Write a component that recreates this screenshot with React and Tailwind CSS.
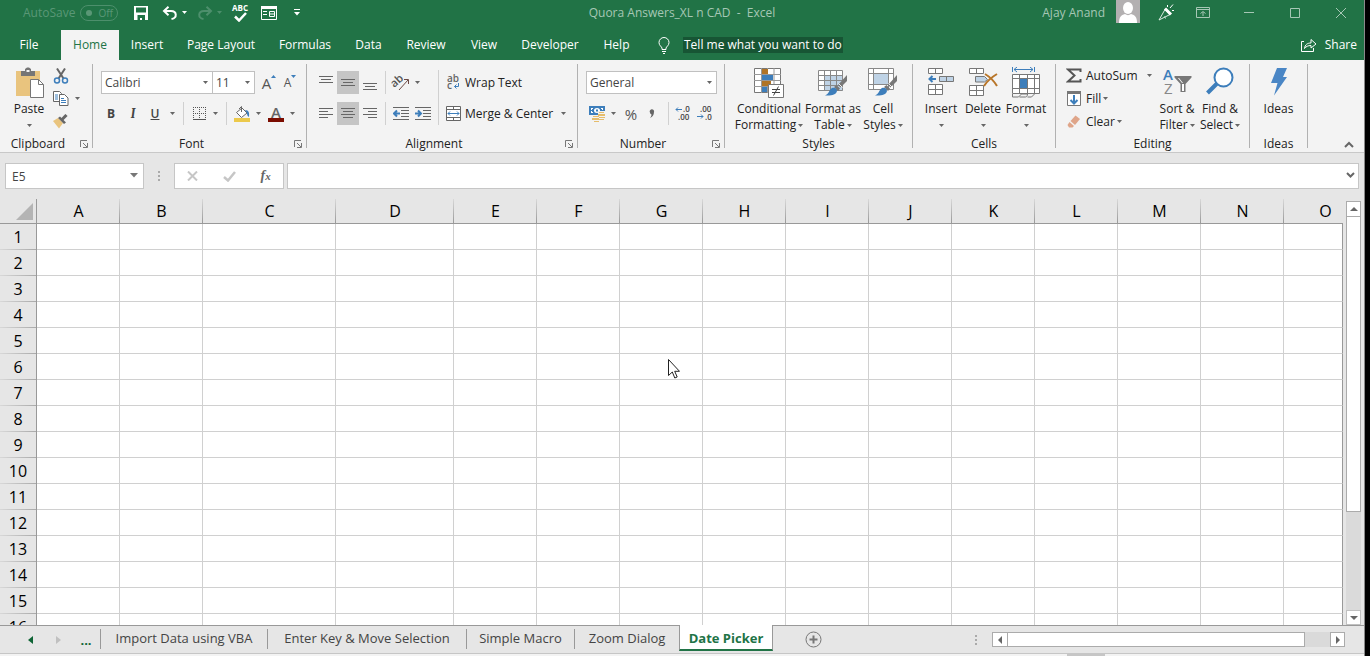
const menuTabs = [
  { name: "Insert", width: "w-[56px]" },
  { name: "Page Layout", width: "w-[92px]" },
  { name: "Formulas", width: "w-[76px]" },
  { name: "Data", width: "w-[51px]" },
  { name: "Review", width: "w-[64px]" },
  { name: "View", width: "w-[52px]" },
  { name: "Developer", width: "w-[80px]" },
  { name: "Help", width: "w-[53px]" },
];

const columns = [
  { name: "A", width: "w-[83px]" },
  { name: "B", width: "w-[83px]" },
  { name: "C", width: "w-[133px]" },
  { name: "D", width: "w-[118px]" },
  { name: "E", width: "w-[83px]" },
  { name: "F", width: "w-[83px]" },
  { name: "G", width: "w-[83px]" },
  { name: "H", width: "w-[83px]" },
  { name: "I", width: "w-[83px]" },
  { name: "J", width: "w-[83px]" },
  { name: "K", width: "w-[83px]" },
  { name: "L", width: "w-[83px]" },
  { name: "M", width: "w-[83px]" },
  { name: "N", width: "w-[83px]" },
  { name: "O", width: "" },
];

const rows = Array.from({ length: 16 }, (_, i) => i + 1);

const sheets = [
  { name: "Import Data using VBA", width: "w-[167px]" },
  { name: "Enter Key & Move Selection", width: "w-[199px]" },
  { name: "Simple Macro", width: "w-[108px]" },
  { name: "Zoom Dialog", width: "w-[105px]" },
];

function Caret({ className = "text-[#666]" }) {
  return (
    <svg className={`shrink-0 ${className}`} width="5" height="3" viewBox="0 0 5 3">
      <path d="M0 0h5L2.500 3z" fill="currentColor" />
    </svg>
  );
}

function Launcher({ label }) {
  return (
    <button aria-label={label} className="flex w-4 items-center justify-center">
      <svg width="8" height="8" viewBox="0 0 8 8" fill="none" stroke="#777">
        <path d="M0.500 7V0.500H7M3 3l4 4M7.500 3v4.500H3" />
      </svg>
    </button>
  );
}

function Group({ title, width, launcher, children }) {
  return (
    <section className={`flex shrink-0 ${width}`} aria-label={title}>
      <div className="flex min-w-0 flex-1 flex-col">
        <div className="flex h-[72px]">{children}</div>
        <div className="flex h-4 items-center">
          <span className="flex-1 text-center">{title}</span>
          {launcher && <Launcher label={`${title} settings`} />}
        </div>
      </div>
      <div className="h-[84px] w-px bg-[#b1b1b1]" />
    </section>
  );
}

function Tool({ label, width = "w-[22px]", active, children }) {
  return (
    <button
      aria-label={label}
      className={`flex h-[23px] shrink-0 items-center justify-center ${width} ${active ? "bg-[#c5c5c5]" : ""}`}
    >
      {children}
    </button>
  );
}

function BigButton({ icon, lines, width, caretBelow, noCaret }) {
  return (
    <button className={`flex shrink-0 flex-col items-center pt-[3px] ${width}`}>
      <span className="mb-[2px] flex h-8 items-start justify-center">{icon}</span>
      {lines.map((line, i) => (
        <span key={line} className="flex h-4 items-center gap-[2px] whitespace-nowrap">
          {line}
          {!caretBelow && !noCaret && i === lines.length - 1 && <Caret />}
        </span>
      ))}
      {caretBelow && (
        <span className="flex h-4 items-center">
          <Caret />
        </span>
      )}
    </button>
  );
}

function Combo({ label, value, width }) {
  return (
    <label className={`relative block shrink-0 ${width}`}>
      <select
        aria-label={label}
        className="block h-[23px] w-full appearance-none border border-[#c0c0c0] bg-white pl-[3px] text-[#444] outline-none"
      >
        <option>{value}</option>
      </select>
      <span className="pointer-events-none absolute inset-y-0 right-[5px] flex items-center">
        <Caret />
      </span>
    </label>
  );
}

function Divider({ className = "" }) {
  return <div className={`w-px shrink-0 bg-[#d0d0d0] ${className}`} />;
}

function Lines({ d }) {
  return (
    <svg width="14" height="17" viewBox="0 0 14 17" stroke="#666" fill="none">
      <path d={d} />
    </svg>
  );
}

function TitleBar() {
  return (
    <header className="flex h-[30px] pb-[5px] text-white">
      <div className="flex flex-1 items-center">
        <label htmlFor="autosave" className="ml-[23px] w-[57px] text-[#5a9776]">AutoSave</label>
        <button
          id="autosave"
          role="switch"
          aria-checked="false"
          className="flex h-4 w-[38px] items-center justify-between rounded-full border border-[#4d8f6c] pr-1 pl-[5px] text-[10px] text-[#5a9776]"
        >
          <span className="h-[6px] w-[6px] rounded-full bg-[#5a9776]" />
          Off
        </button>
        <button aria-label="Save" className="ml-2 flex w-[30px] justify-center">
          <svg width="14" height="14" viewBox="0 0 14 14">
            <path fillRule="evenodd" fill="currentColor" d="M0 0h14v14H0zM2 1.500v5h10v-5zM3.500 9v5H6v-2h2v2h3V9z" />
          </svg>
        </button>
        <button aria-label="Undo" className="ml-[2px] flex w-6 justify-center">
          <svg width="16" height="14" viewBox="0 0 16 14" fill="none" stroke="currentColor" strokeWidth="2">
            <path d="M6.500 0.800L2 5l4.500 4.200M2.500 5H9c6 0 6.500 7 0.500 8" />
          </svg>
        </button>
        <Caret className="text-white" />
        <button aria-label="Redo" className="ml-[6px] flex w-6 justify-center text-[#4d8f6c]">
          <svg width="16" height="14" viewBox="0 0 16 14" fill="none" stroke="currentColor" strokeWidth="2">
            <path d="M9.500 0.800L14 5l-4.500 4.200M13.500 5H7C1 5 0.500 12 6.500 13" />
          </svg>
        </button>
        <Caret className="text-[#4d8f6c]" />
        <button aria-label="Spelling" className="ml-[6px] flex w-6 flex-col items-center text-[8px] leading-[8px] font-bold">
          ABC
          <svg width="13" height="10" viewBox="0 0 13 10" fill="none" stroke="currentColor" strokeWidth="2.500">
            <path d="M1 4.500l4 4L12 1" />
          </svg>
        </button>
        <button aria-label="Form" className="ml-[5px] flex w-6 justify-center">
          <svg width="16" height="14" viewBox="0 0 16 14" fill="none" stroke="currentColor">
            <path d="M0.500 0.500h15v13H0.500zM2 5.500h4M2 8.500h4M8.500 5.500h5v5h-5zM8.500 8h5" />
            <path d="M0 1.500h16" strokeWidth="3" />
          </svg>
        </button>
        <button aria-label="Customize toolbar" className="ml-1 flex w-6 justify-center">
          <svg width="6" height="7" viewBox="0 0 6 7" fill="currentColor">
            <path d="M0 0h6v1H0zM0 3h6L3 6.500z" />
          </svg>
        </button>
      </div>
      <div className="flex items-center whitespace-pre text-[#a6c7b5]">Quora Answers_XL n CAD  -  Excel</div>
      <div className="flex flex-1 justify-end text-[#a6c7b5]">
        <span className="mr-[11px] flex items-center">Ajay Anand</span>
        <svg width="24" height="23" viewBox="0 0 24 23">
          <path d="M0 0h24v23H0z" fill="#b3b0b1" />
          <ellipse cx="12" cy="8" rx="5" ry="6" fill="#fff" />
          <path d="M3 23c0-6 2-8 6-9 2 1.500 4 1.500 6 0 4 1 6 3 6 9z" fill="#fff" />
        </svg>
        <button aria-label="Coming soon" className="ml-3 flex w-7 items-center justify-center">
          <svg width="17" height="17" viewBox="0 0 17 17" fill="none" stroke="#dcebe2">
            <path d="M1 16L7 5.500l5 5zM6.500 12.500l1 2" />
            <path d="M7 4.500l6 6" strokeWidth="3" stroke="#fff" />
            <path d="M9.500 1v2M12 4l3-3.500M14 6.500h2" stroke="#fff" />
          </svg>
        </button>
        <button aria-label="Ribbon display options" className="flex w-[46px] items-center justify-center">
          <svg width="14" height="11" viewBox="0 0 14 11" fill="none" stroke="currentColor">
            <path d="M0.500 0.500h13v10H0.500zM1 2.500h12M7 9V5M4.500 6.500L7 4.500l2.500 2" />
          </svg>
        </button>
        <button aria-label="Minimize" className="flex w-[46px] items-center justify-center">
          <svg width="10" height="10" viewBox="0 0 10 10" stroke="currentColor"><path d="M0 4.500h10" /></svg>
        </button>
        <button aria-label="Maximize" className="flex w-[46px] items-center justify-center">
          <svg width="10" height="10" viewBox="0 0 10 10" stroke="currentColor" fill="none"><path d="M0.500 0.500h9v9h-9z" /></svg>
        </button>
        <button aria-label="Close" className="flex w-[46px] items-center justify-center">
          <svg width="10" height="10" viewBox="0 0 10 10" stroke="currentColor"><path d="M0 0l10 10M10 0L0 10" /></svg>
        </button>
      </div>
    </header>
  );
}

function MenuBar() {
  return (
    <nav className="flex h-[30px] text-white">
      <button className="w-[61px] pr-[3px]">File</button>
      <button className="w-[58px] bg-[#f3f3f3] text-[#217346]">Home</button>
      {menuTabs.map((tab) => (
        <button key={tab.name} className={`whitespace-nowrap ${tab.width}`}>
          {tab.name}
        </button>
      ))}
      <button className="ml-[15px] flex items-center gap-[13px] whitespace-nowrap">
        <svg width="12" height="17" viewBox="0 0 12 17" fill="none" stroke="currentColor">
          <path d="M4 12.500V11C3.500 9.500 1 8.500 1 5.500a5 5 0 0 1 10 0c0 3-2.500 4-3 5.500v1.500M4 12.500h4M4 14.500h4M5 16.500h2" />
        </svg>
        <span className="bg-[#175534] px-px leading-4">Tell me what you want to do</span>
      </button>
      <button className="mr-[7px] ml-auto flex items-center gap-2">
        <svg width="16" height="14" viewBox="0 0 16 14" fill="none" stroke="currentColor">
          <path d="M3 3.500H0.500v10h12V10M3.500 10.500c0.500-4 3-5.500 6.500-5.500V1.500L15 6l-5 4V7.500c-3 0-5 1-6.500 3z" />
        </svg>
        Share
      </button>
    </nav>
  );
}

const pasteIcon = (
  <svg width="29" height="31" viewBox="0 0 29 31">
    <path d="M1 4h24v25H1z" fill="#e9c47e" />
    <path d="M6 9V4h4V2l2-1.500h2L16 2v2h4v5z" fill="#767676" />
    <path d="M11.500 3h3v2h-3z" fill="#f3f3f3" />
    <path d="M15.500 12.500h8l5 5v13h-13z" fill="#fff" stroke="#767676" />
    <path d="M23.500 12.500v5h5" fill="none" stroke="#767676" />
  </svg>
);

function ClipboardGroup() {
  return (
    <Group title="Clipboard" width="w-[93px]" launcher>
      <div className="pl-2">
        <BigButton width="w-[42px]" lines={["Paste"]} caretBelow icon={pasteIcon} />
      </div>
      <div className="flex flex-col">
        <Tool label="Cut">
          <svg width="16" height="16" viewBox="0 0 16 16" fill="none">
            <path d="M4 0.500l6.500 10M12 0.500l-6.500 10" stroke="#666" strokeWidth="2" />
            <circle cx="4" cy="12.500" r="2.500" stroke="#3d7ebb" strokeWidth="1.500" />
            <circle cx="12" cy="12.500" r="2.500" stroke="#3d7ebb" strokeWidth="1.500" />
          </svg>
        </Tool>
        <div className="flex items-center">
          <Tool label="Copy">
            <svg width="16" height="15" viewBox="0 0 16 15" fill="#fff" stroke="#666">
              <path d="M0.500 0.500h6l2 2v8h-8z" />
              <path d="M6.500 3.500h5l3.500 3.500v7.500H6.500z" />
              <path d="M2 4h3M2 6h3M2 8h3M8 7.500h3M8 9.500h5M8 11.500h5" stroke="#3d7ebb" />
            </svg>
          </Tool>
          <Tool label="Copy options" width="w-[10px]"><Caret /></Tool>
        </div>
        <Tool label="Format Painter">
          <svg width="16" height="15" viewBox="0 0 16 15">
            <path d="M0 7l5-3 5 5-4 5.500z" fill="#e9c47e" />
            <path d="M5 4l2-1.500 6 6L11 10z" fill="#666" />
            <path d="M8.500 6l5-5" stroke="#666" strokeWidth="3" />
          </svg>
        </Tool>
      </div>
    </Group>
  );
}

function FontGroup() {
  return (
    <Group title="Font" width="w-[214px]" launcher>
      <div className="flex flex-col gap-2 pt-[7px] pl-2">
        <div className="flex">
          <Combo label="Font name" value="Calibri" width="w-[112px]" />
          <div className="-ml-px">
            <Combo label="Font size" value="11" width="w-[43px]" />
          </div>
          <Tool label="Increase font size" width="w-6">
            <span className="ml-1 text-[15px] font-medium text-[#555]">A</span>
            <svg className="mb-3" width="5" height="3" viewBox="0 0 5 3"><path d="M0 3h5L2.500 0z" fill="#3d7ebb" /></svg>
          </Tool>
          <Tool label="Decrease font size">
            <span className="text-[12px] font-medium text-[#555]">A</span>
            <svg className="mb-3" width="5" height="3" viewBox="0 0 5 3"><path d="M0 0h5L2.500 3z" fill="#3d7ebb" /></svg>
          </Tool>
        </div>
        <div className="-ml-px flex text-[#444]">
          <Tool label="Bold"><b>B</b></Tool>
          <Tool label="Italic"><i className="font-serif text-[13px] font-semibold">I</i></Tool>
          <Tool label="Underline"><span className="font-semibold underline">U</span></Tool>
          <Tool label="Underline options" width="w-3"><Caret /></Tool>
          <Divider className="mx-[5px]" />
          <Tool label="Borders" width="w-5">
            <svg width="13" height="13" viewBox="0 0 13 13" fill="none" stroke="#555">
              <path d="M0 0.500h13M0 6.500h13M0.500 0v13M6.500 0v13M12.500 0v13" strokeDasharray="1 1" />
              <path d="M0 12.500h13" />
            </svg>
          </Tool>
          <Tool label="Border options" width="w-3"><Caret /></Tool>
          <Divider className="mx-[5px]" />
          <Tool label="Fill color" width="w-5">
            <svg width="16" height="16" viewBox="0 0 16 16">
              <path d="M2.500 6.500L8 2l5 5-5.500 4.500z" fill="#fff" stroke="#666" />
              <path d="M7.500 6V0.500L5 3" fill="none" stroke="#666" />
              <path d="M11 4c4 0 4.500 3 4 7-1.500-1-2-2-2-4z" fill="#3d7ebb" />
              <path d="M0 12h16v4H0z" fill="#ecc94b" />
            </svg>
          </Tool>
          <Tool label="Fill color options" width="w-3"><Caret /></Tool>
          <Tool label="Font color" width="w-6">
            <span className="flex h-4 w-4 justify-center border-b-4 border-[#7b0c00] text-[15px] leading-3 font-semibold text-[#666]">A</span>
          </Tool>
          <Tool label="Font color options" width="w-2"><Caret /></Tool>
        </div>
      </div>
    </Group>
  );
}

function AlignmentGroup() {
  return (
    <Group title="Alignment" width="w-[271px]" launcher>
      <div className="flex flex-col gap-2 pt-[7px] pl-2">
        <div className="flex">
          <Tool label="Top Align"><Lines d="M0 2.500h14M2 5.500h10M0 8.500h14" /></Tool>
          <Tool label="Middle Align" active><Lines d="M0 5.500h14M2 8.500h10M0 11.500h14" /></Tool>
          <Tool label="Bottom Align"><Lines d="M0 9.500h14M2 12.500h10M0 15.500h14" /></Tool>
          <Divider className="mr-[5px] ml-1" />
          <Tool label="Orientation" width="w-5">
            <svg className="overflow-visible" width="18" height="17" viewBox="0 0 18 17">
              <text x="1" y="13" fontSize="11" fontWeight="600" fill="#555" transform="rotate(-42 3 12)">ab</text>
              <path d="M7 16L16 6M12 5.500h4.500V10" fill="none" stroke="#6b4a45" />
            </svg>
          </Tool>
          <Tool label="Orientation options" width="w-3"><Caret /></Tool>
        </div>
        <div className="flex">
          <Tool label="Align Left"><Lines d="M0 3.500h14M0 6.500h9M0 9.500h14M0 12.500h9" /></Tool>
          <Tool label="Center" active><Lines d="M0 3.500h14M2 6.500h10M0 9.500h14M2 12.500h10" /></Tool>
          <Tool label="Align Right"><Lines d="M0 3.500h14M5 6.500h9M0 9.500h14M5 12.500h9" /></Tool>
          <Divider className="mr-[5px] ml-1" />
          <Tool label="Decrease Indent" width="w-5">
            <svg width="16" height="13" viewBox="0 0 16 13" fill="none" stroke="#666">
              <path d="M0 0.500h16M8 3.500h8M8 6.500h8M8 9.500h8M0 12.500h16" />
              <path d="M7 6.500H1.500M4 3.500l-3 3 3 3" stroke="#3d7ebb" strokeWidth="2" />
            </svg>
          </Tool>
          <Tool label="Increase Indent" width="w-6">
            <svg width="16" height="13" viewBox="0 0 16 13" fill="none" stroke="#666">
              <path d="M0 0.500h16M8 3.500h8M8 6.500h8M8 9.500h8M0 12.500h16" />
              <path d="M0 6.500h5.500M3 3.500l3 3-3 3" stroke="#3d7ebb" strokeWidth="2" />
            </svg>
          </Tool>
        </div>
      </div>
      <Divider className="mt-[6px] ml-[3px] h-[55px]" />
      <div className="flex flex-col gap-2 pt-[7px] pl-[7px]">
        <button className="flex h-[23px] items-center gap-1 whitespace-nowrap">
          <svg className="overflow-visible" width="15" height="17" viewBox="0 0 15 17">
            <text x="1" y="8" fontSize="10" fontWeight="600" fill="#666">ab</text>
            <text x="1" y="15" fontSize="10" fontWeight="600" fill="#666">c</text>
            <path d="M12.500 9v3.500H8.500M10.500 10.500l-2 2 2 2" fill="none" stroke="#3d7ebb" />
          </svg>
          Wrap Text
        </button>
        <button className="flex h-[23px] items-center gap-1 whitespace-nowrap">
          <svg width="15" height="15" viewBox="0 0 15 15" fill="#fff" stroke="#666">
            <path d="M0.500 0.500h14v14H0.500zM0.500 3.500h14M0.500 11.500h14M7.500 0.500v3M7.500 11.500v3" />
            <path d="M2 7.500h11M4 5.500l-2 2 2 2M11 5.500l2 2-2 2" fill="none" stroke="#3d7ebb" />
          </svg>
          Merge &amp; Center
          <span className="ml-1"><Caret /></span>
        </button>
      </div>
    </Group>
  );
}

function NumberGroup() {
  return (
    <Group title="Number" width="w-[147px]" launcher>
      <div className="flex flex-col gap-2 pt-[7px] pl-2">
        <Combo label="Number format" value="General" width="w-[131px]" />
        <div className="flex text-[#555]">
          <Tool label="Accounting format">
            <svg width="16" height="16" viewBox="0 0 16 16">
              <path d="M0 0h16v9H0z" fill="#3d7ebb" />
              <path d="M2 2h2v1H3v1H2zM14 2h-2v1h1v1h1zM2 7h2V6H3V5H2z" fill="#fff" />
              <ellipse cx="8" cy="4.500" rx="3" ry="2.500" fill="#fff" />
              <path d="M7 3.500h2v2H7z" fill="#3d7ebb" />
              <path d="M9 5h7v9H9zM3 9h8v7H3z" fill="#f3f3f3" />
              <path d="M10 6h5v1h-5zM9 8h7v2H9zM10 11h6v1h-6zM10 13h5v1h-5zM4 10h6v1H4zM3 12h7v2H3zM5 15h5v1H5z" fill="#e6bd6c" />
            </svg>
          </Tool>
          <Tool label="Accounting options" width="w-[10px]"><Caret /></Tool>
          <Tool label="Percent" width="w-[26px]"><span className="text-[15px]">%</span></Tool>
          <Tool label="Comma" width="w-4">
            <svg width="6" height="9" viewBox="0 0 6 9"><path d="M1 3.500a2.200 2.200 0 1 1 4-0.500c0 3-1.500 5-4 6 1.500-2 1.500-3 1.500-3.500C1.800 5 1 4.500 1 3.500z" fill="#666" /></svg>
          </Tool>
          <Divider className="mr-[3px] ml-2" />
          <Tool label="Increase decimal">
            <svg className="overflow-visible" width="16" height="15" viewBox="0 0 16 15" fontSize="8" fontWeight="600" fill="#444">
              <text x="8" y="6">.0</text>
              <text x="3" y="14">.00</text>
              <path d="M7 3.500H1M3 1.500l-2 2 2 2" fill="none" stroke="#3d7ebb" />
            </svg>
          </Tool>
          <Tool label="Decrease decimal">
            <svg className="overflow-visible" width="16" height="15" viewBox="0 0 16 15" fontSize="8" fontWeight="600" fill="#444">
              <text x="3" y="6">.00</text>
              <text x="8" y="14">.0</text>
              <path d="M0 10.500h6M4 8.500l2 2-2 2" fill="none" stroke="#3d7ebb" />
            </svg>
          </Tool>
        </div>
      </div>
    </Group>
  );
}

function Brush() {
  return (
    <g>
      <path d="M29 8l-9 10 2.500 2.500L29 14z" fill="#777" />
      <path d="M20.500 16.500l4 4" stroke="#f3f3f3" strokeWidth="1" />
      <path d="M18.500 18l3.500 3.500-2 2.500-4-4z" fill="#777" />
      <path d="M14 21c2-1 5 0 5 3-1 4-6 5-12 4.500 4-1.500 4-5.500 7-7.500z" fill="#3d7ebb" />
    </g>
  );
}

const conditionalIcon = (
  <svg width="30" height="31" viewBox="0 0 30 31">
    <path d="M0.500 1.500h26v24h-26z" fill="#fff" stroke="#777" />
    <path d="M7.500 1v25M20 1v25M13.500 1v25M0 7.500h27M0 13.500h27M0 19.500h27" stroke="#999" />
    <path d="M8 2h6v5H8zM8 14h9v5H8z" fill="#b07426" />
    <path d="M8 8h11v5H8zM8 20h5v5H8z" fill="#3d7ebb" />
    <path d="M14.500 17.500h15v13h-15z" fill="#fff" stroke="#777" />
    <path d="M18 22.500h8M18 25.500h8M24.500 19.500l-5 9" stroke="#444" />
  </svg>
);

const tableIcon = (
  <svg width="30" height="31" viewBox="0 0 30 31">
    <path d="M0.500 3.500h24v20h-24z" fill="#fff" />
    <path d="M7 8h18v16H7z" fill="#bfd3e6" />
    <path d="M0.500 3.500h24v20h-24zM6.500 3v21M12.500 3v21M18.500 3v21M0 8.500h25M0 13.500h25M0 18.500h25" fill="none" stroke="#888" />
    <Brush />
  </svg>
);

const cellStyleIcon = (
  <svg width="30" height="31" viewBox="0 0 30 31">
    <path d="M0.500 1.500h25v21h-25z" fill="#fff" stroke="#888" />
    <path d="M5.500 1v22M20.500 1v22M0 6.500h26M0 17.500h26" stroke="#888" />
    <path d="M6 7h14v10H6z" fill="#bfd3e6" />
    <Brush />
  </svg>
);

function StylesGroup() {
  return (
    <Group title="Styles" width="w-[188px]">
      <div className="flex pl-2">
        <BigButton width="w-[72px]" lines={["Conditional", "Formatting"]} icon={conditionalIcon} />
        <BigButton width="w-[56px]" lines={["Format as", "Table"]} icon={tableIcon} />
        <BigButton width="w-[44px]" lines={["Cell", "Styles"]} icon={cellStyleIcon} />
      </div>
    </Group>
  );
}

const insertIcon = (
  <svg width="28" height="30" viewBox="0 0 28 30" fill="#fff" stroke="#777">
    <path d="M1.500 1.500h14v5h-14zM8.500 1.500v5M1.500 17.500h14v10h-14zM8.500 17.500v10M1.500 22.500h14" />
    <path d="M12.500 9.500h14v5h-14zM19.500 9.500v5" fill="#bfd3e6" />
    <path d="M9 12H3M5.500 9L2.500 12l3 3" fill="none" stroke="#3d7ebb" strokeWidth="2" />
  </svg>
);

const deleteIcon = (
  <svg width="30" height="30" viewBox="0 0 30 30" fill="#fff" stroke="#777">
    <path d="M1.500 1.500h14v5h-14zM8.500 1.500v5M1.500 18.500h14v10h-14zM8.500 18.500v10M1.500 23.500h14" />
    <path d="M7.500 9.500h9l3 3-3 2.500h-9z" fill="#bfd3e6" />
    <path d="M17 7c5 3 9 7 12 12M29 7c-5 3-10 7-13 12" fill="none" stroke="#b8762a" strokeWidth="2" />
  </svg>
);

const formatIcon = (
  <svg width="28" height="32" viewBox="0 0 28 32" fill="#fff" stroke="#777">
    <path d="M0.500 7.500h27v19h-27zM7.500 7v20M15.500 7v20M22.500 7v20M0 11.500h28M0 21.500h28" />
    <path d="M0.500 27v3h6l3-3h6c0 2-1 3-2 3h-6M15.500 30h4l3-3" fill="none" />
    <path d="M8 12h7v9H8z" fill="#3d7ebb" stroke="none" />
    <path d="M0.500 0v5M22.500 0v5M2 2.500h19M5 0L2 2.500 5 5M18 0l3 2.500L18 5" fill="none" stroke="#3d7ebb" />
  </svg>
);

function CellsGroup() {
  return (
    <Group title="Cells" width="w-[143px]">
      <div className="flex pl-[7px]">
        <BigButton width="w-[42px]" lines={["Insert"]} caretBelow icon={insertIcon} />
        <BigButton width="w-[42px]" lines={["Delete"]} caretBelow icon={deleteIcon} />
        <BigButton width="w-[44px]" lines={["Format"]} caretBelow icon={formatIcon} />
      </div>
    </Group>
  );
}

const sortIcon = (
  <svg width="30" height="30" viewBox="0 0 30 30">
    <text x="1" y="13" fontSize="15" fontWeight="600" fill="#3d7ebb">A</text>
    <text x="2" y="27" fontSize="15" fill="#888">Z</text>
    <path d="M12.500 9h17v1.500l-6 6.500v8h-5v-8l-6-6.500z" fill="#777" />
    <path d="M20 17h2v7h-2zM16 11h1l4 5h-1z" fill="#fff" />
  </svg>
);

const findIcon = (
  <svg width="28" height="28" viewBox="0 0 28 28">
    <path d="M1.500 26l10-10" stroke="#3d7ebb" strokeWidth="4" />
    <circle cx="17.500" cy="10.500" r="9" fill="#fff" stroke="#3d7ebb" strokeWidth="2" />
  </svg>
);

const ideasIcon = (
  <svg width="18" height="29" viewBox="0 0 18 29">
    <path d="M7 1h10l-4 9h4L4 28.500 7.500 16H1z" fill="#4a86c5" />
  </svg>
);

function EditingGroup() {
  return (
    <Group title="Editing" width="w-[194px]">
      <div className="w-[100px] pl-2">
        <button className="flex h-[23px] items-center gap-[2px]">
          <span className="flex w-5 justify-center">
            <svg width="16" height="15" viewBox="0 0 16 15">
              <path d="M14.500 4V1.500H2l6.500 6-6.500 6h12.500V11" fill="none" stroke="#555" strokeWidth="2" />
            </svg>
          </span>
          AutoSum
          <span className="ml-[7px]"><Caret /></span>
        </button>
        <button className="flex h-[23px] items-center gap-[2px]">
          <span className="flex w-5 justify-center">
            <svg width="14" height="15" viewBox="0 0 14 15">
              <path d="M0.500 0.500h13v14H0.500z" fill="#fff" stroke="#777" />
              <path d="M0 0h14v3H0z" fill="#777" />
              <path d="M7 4v8M3.500 9L7 12.500 10.500 9" fill="none" stroke="#3d7ebb" strokeWidth="2" />
            </svg>
          </span>
          Fill <Caret />
        </button>
        <button className="flex h-[23px] items-center gap-[2px]">
          <span className="flex w-5 justify-center">
            <svg width="14" height="13" viewBox="0 0 14 13">
              <path d="M8.500 0.500L13 4l-5 6-4.500-4z" fill="#dfa589" />
              <path d="M2.500 7L7 11l-1.500 1.500H2L0.500 10z" fill="#dfa589" />
            </svg>
          </span>
          Clear <Caret />
        </button>
      </div>
      <BigButton width="w-[42px]" lines={["Sort &", "Filter"]} icon={sortIcon} />
      <BigButton width="w-[44px]" lines={["Find &", "Select"]} icon={findIcon} />
    </Group>
  );
}

function Ribbon() {
  return (
    <div className="flex border-b border-[#c8c8c8] bg-[#f3f3f3] pt-1 text-[#222]">
      <ClipboardGroup />
      <FontGroup />
      <AlignmentGroup />
      <NumberGroup />
      <StylesGroup />
      <CellsGroup />
      <EditingGroup />
      <Group title="Ideas" width="w-[58px]">
        <BigButton width="w-[57px]" lines={["Ideas"]} noCaret icon={ideasIcon} />
      </Group>
      <button aria-label="Collapse ribbon" className="mr-[10px] mb-1 ml-auto self-end">
        <svg width="10" height="7" viewBox="0 0 10 7" fill="none" stroke="#666" strokeWidth="2">
          <path d="M1 6l4-4 4 4" />
        </svg>
      </button>
    </div>
  );
}

function FormulaBar() {
  return (
    <div className="flex h-[46px] items-start pt-[10px] pr-[5px] pl-[5px]">
      <div className="relative w-[139px]">
        <input
          aria-label="Name box"
          defaultValue="E5"
          className="block h-[26px] w-full border border-[#c6c6c6] bg-white px-[6px] text-[#444] outline-none"
        />
        <svg className="absolute top-[10px] right-[6px]" width="8" height="5" viewBox="0 0 8 5">
          <path d="M0 0h8L4 4.500z" fill="#777" />
        </svg>
      </div>
      <div className="flex h-[26px] w-[30px] flex-col items-center justify-center gap-[2px]">
        <span className="h-[2px] w-[2px] bg-[#aaa]" />
        <span className="h-[2px] w-[2px] bg-[#aaa]" />
        <span className="h-[2px] w-[2px] bg-[#aaa]" />
      </div>
      <div className="mr-[3px] flex h-[26px] w-[110px] items-center justify-around border border-[#c6c6c6] bg-white">
        <button aria-label="Cancel">
          <svg width="11" height="10" viewBox="0 0 11 10" stroke="#c6c6c6" strokeWidth="2"><path d="M1 0.500l9 9M10 0.500l-9 9" /></svg>
        </button>
        <button aria-label="Enter">
          <svg width="13" height="11" viewBox="0 0 13 11" fill="none" stroke="#c6c6c6" strokeWidth="2.500"><path d="M1 6l4 3.500L12 1" /></svg>
        </button>
        <button aria-label="Insert function" className="font-['Liberation_Serif',serif] text-[14px] leading-4 font-bold text-[#666] italic">
          f<span className="text-[11px]">x</span>
        </button>
      </div>
      <div className="relative flex-1">
        <input
          aria-label="Formula"
          className="block h-[26px] w-full border border-[#c6c6c6] bg-white px-2 outline-none"
        />
        <svg className="absolute top-[9px] right-1" width="9" height="7" viewBox="0 0 9 7" fill="none" stroke="#666" strokeWidth="2">
          <path d="M1 1l3.500 3.500L8 1" />
        </svg>
      </div>
    </div>
  );
}

function Grid() {
  return (
    <div className="flex min-h-0 flex-1">
      <div className="min-w-0 flex-1 overflow-hidden">
        <table className="w-full table-fixed border-separate border-spacing-0 text-base leading-5 text-black">
          <thead>
            <tr className="h-[25px]">
              <th className="w-[37px] border-r border-b border-[#999] p-0">
                <svg className="mt-px ml-4" width="17" height="17" viewBox="0 0 17 17">
                  <path d="M17 0v17H0z" fill="#b4b4b4" />
                </svg>
              </th>
              {columns.map((col) => (
                <th
                  key={col.name}
                  className={`border-b border-[#999] p-0 font-normal ${
                    col.width
                      ? `${col.width} bg-[linear-gradient(#d8d8d8,#999)] bg-[length:1px_100%] bg-right bg-no-repeat`
                      : "pl-6"
                  }`}
                >
                  {col.name}
                </th>
              ))}
            </tr>
          </thead>
          <tbody>
            {rows.map((row) => (
              <tr key={row} className="h-[26px]">
                <th className="border-r border-[#999] bg-[linear-gradient(90deg,#d8d8d8,#aaa)] bg-[length:100%_1px] bg-bottom bg-no-repeat p-0 font-normal">
                  {row}
                </th>
                {columns.map((col) => (
                  <td
                    key={col.name}
                    className={`border-r border-b border-b-[#d0d0d0] bg-white p-0 ${
                      col.width ? "border-r-[#d0d0d0]" : "border-r-[#999]"
                    }`}
                  />
                ))}
              </tr>
            ))}
          </tbody>
        </table>
      </div>
      <div className="mt-[2px] mr-[3px] ml-[3px] flex w-[15px] flex-col bg-[#dadada]">
        <button aria-label="Scroll up" className="flex h-4 items-center justify-center border border-[#ababab] bg-white">
          <svg width="8" height="4" viewBox="0 0 8 4"><path d="M0 4h8L4 0z" fill="#666" /></svg>
        </button>
        <div className="-mt-px h-[296px] border border-[#ababab] bg-white" />
        <button aria-label="Scroll down" className="mt-auto flex h-[15px] items-center justify-center border border-[#c0c0c0] bg-white">
          <svg width="8" height="4" viewBox="0 0 8 4"><path d="M0 0h8L4 4z" fill="#666" /></svg>
        </button>
      </div>
    </div>
  );
}

function SheetBar() {
  return (
    <footer>
      <div className="flex h-[29px] border-t border-b border-t-[#999] border-b-[#c6c6c6] text-[13px] text-[#444]">
        <div className="flex w-[100px] items-center pl-4 text-[#0f6435]">
          <button aria-label="Previous sheet" className="flex w-7 justify-center">
            <svg width="5" height="8" viewBox="0 0 5 8"><path d="M5 0v8L0 4z" fill="currentColor" /></svg>
          </button>
          <button aria-label="Next sheet" className="flex w-7 justify-center text-[#c0c0c0]">
            <svg width="5" height="8" viewBox="0 0 5 8"><path d="M0 0v8l5-4z" fill="currentColor" /></svg>
          </button>
          <button aria-label="More sheets" className="w-7 font-bold">...</button>
        </div>
        {sheets.map((sheet) => (
          <button key={sheet.name} className={`mt-[3px] h-5 border-l border-[#999] pb-[2px] whitespace-nowrap ${sheet.width}`}>
            {sheet.name}
          </button>
        ))}
        <button className="-mt-px h-[26px] w-[94px] border-r border-b-2 border-l border-r-[#999] border-b-[#217346] border-l-[#999] bg-white pt-[2px] font-bold whitespace-nowrap text-[#217346]">
          Date Picker
        </button>
        <button aria-label="New sheet" className="ml-8 self-center">
          <svg width="17" height="17" viewBox="0 0 17 17" fill="none" stroke="#777">
            <circle cx="8.500" cy="8.500" r="7.500" />
            <path d="M8.500 4.500v8M4.500 8.500h8" strokeWidth="2" />
          </svg>
        </button>
        <div className="ml-auto flex flex-col justify-center gap-[2px] pr-[15px]">
          <span className="h-[2px] w-[2px] bg-[#aaa]" />
          <span className="h-[2px] w-[2px] bg-[#aaa]" />
          <span className="h-[2px] w-[2px] bg-[#aaa]" />
        </div>
        <div className="mt-[6px] mr-[19px] flex h-[15px] w-[353px] bg-[#dadada]">
          <button aria-label="Scroll left" className="flex w-4 items-center justify-center border border-[#ababab] bg-white">
            <svg width="4" height="8" viewBox="0 0 4 8"><path d="M4 0v8L0 4z" fill="#666" /></svg>
          </button>
          <div className="-ml-px w-[298px] border border-[#ababab] bg-white" />
          <button aria-label="Scroll right" className="ml-auto flex w-[15px] items-center justify-center border border-[#ababab] bg-white">
            <svg width="4" height="8" viewBox="0 0 4 8"><path d="M0 0v8l4-4z" fill="#666" /></svg>
          </button>
        </div>
      </div>
      <div className="flex h-[2px] justify-end bg-[#f3f3f3] pr-[259px]">
        <span className="w-[38px] bg-[#c6c6c6]" />
      </div>
    </footer>
  );
}

function App() {
  return (
    <div className="relative flex h-screen overflow-hidden bg-black pr-[5px] font-['Open_Sans','Noto_Sans',sans-serif] text-[12px] leading-4">
      <div className="flex min-w-0 flex-1 flex-col border-r border-[#8a8a8a] bg-[#e6e6e6]">
        <div className="bg-[#217346]">
          <TitleBar />
          <MenuBar />
        </div>
        <Ribbon />
        <FormulaBar />
        <Grid />
        <SheetBar />
      </div>
      {/* mouse pointer */}
      <svg className="pointer-events-none absolute top-[359px] left-[668px]" width="12" height="20" viewBox="0 0 12 20">
        <path d="M0.500 0.500v16l3.800-3.500 2.500 6 2.400-1-2.500-5.700h4.800z" fill="#fff" stroke="#222" />
      </svg>
    </div>
  );
}

export default App;
